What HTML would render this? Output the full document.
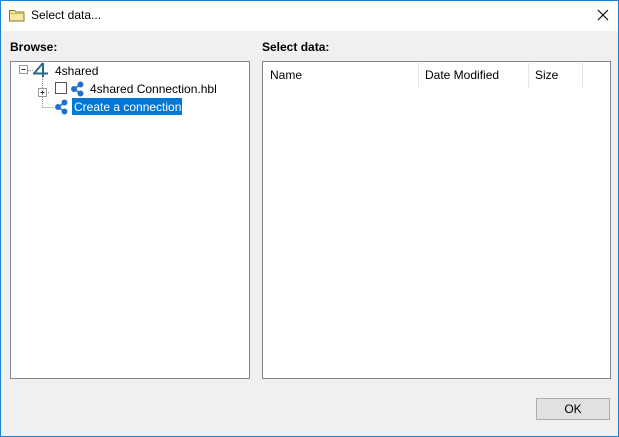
<!DOCTYPE html>
<html><head><style>
*{margin:0;padding:0;box-sizing:border-box}
body{width:619px;height:437px;background:#f0f0f0;font-family:"Liberation Sans",sans-serif;font-size:12px;color:#000;position:relative;overflow:hidden}
.title{position:absolute;left:0;top:0;width:619px;height:31px;background:#fff}
.abs{position:absolute;white-space:nowrap}
.box{position:absolute;background:#fff;border:1px solid #828790}
</style></head><body>
<div class="title"></div>
<div class="abs" style="left:0;top:0;width:619px;height:437px;border:1px solid #1883d7"></div>
<svg class="abs" style="left:9px;top:8px" width="16" height="14"><path d="M0.5 2.5h5l1.5 1.5h8v9h-14.5z" fill="#f8e9a0" stroke="#8a7a30"/><path d="M0.5 5.5h15" stroke="#c9b45a"/></svg>
<div class="abs" style="left:31px;top:8px;font-size:12px">Select data...</div>
<svg class="abs" style="left:597px;top:9px" width="12" height="12"><path d="M1 1L11 11M11 1L1 11" stroke="#000" stroke-width="1.1"/></svg>
<div class="abs" style="left:10px;top:40px;font-weight:bold">Browse:</div>
<div class="abs" style="left:262px;top:40px;font-weight:bold">Select data:</div>
<div class="box" style="left:10px;top:61px;width:240px;height:318px"></div>
<div class="box" style="left:262px;top:61px;width:349px;height:318px"></div>
<div class="abs" style="left:418px;top:63px;width:1px;height:24px;background:#e5e5e5"></div>
<div class="abs" style="left:528px;top:63px;width:1px;height:24px;background:#e5e5e5"></div>
<div class="abs" style="left:582px;top:63px;width:1px;height:24px;background:#e5e5e5"></div>
<div class="abs" style="left:270px;top:68px">Name</div>
<div class="abs" style="left:425px;top:68px">Date Modified</div>
<div class="abs" style="left:535px;top:68px">Size</div>
<svg class="abs" style="left:14px;top:62px" width="200" height="56">
<g stroke="#888" stroke-dasharray="1 1" fill="none">
<path d="M14 8.5h5M28.5 15v31M32 30.5h4M28.5 45.5h12"/>
</g>
<rect x="5.5" y="3.5" width="8" height="8" fill="#fff" stroke="#999"/><path d="M7.5 7.5h4" stroke="#333"/>
<path d="M19 11.5h15M29 1L20 11.5M29 1v14" stroke="#2b6a84" stroke-width="2" fill="none"/>
<rect x="24.5" y="26.5" width="8" height="8" fill="#fff" stroke="#999"/><path d="M26.5 30.5h4M28.5 28.5v4" stroke="#333"/>
<rect x="41.5" y="20.5" width="11" height="11" fill="#fff" stroke="#555"/>
<g fill="#1f6fd0" stroke="#1f6fd0" stroke-width="1.5"><path d="M60 27L66 23M60 27L66 31"/><circle cx="60" cy="27" r="2.2"/><circle cx="66.5" cy="22.5" r="2.2"/><circle cx="66.5" cy="31.5" r="2.2"/></g>
<g fill="#1f6fd0" stroke="#1f6fd0" stroke-width="1.5"><path d="M44 45L50 41M44 45L50 49"/><circle cx="44" cy="45" r="2.2"/><circle cx="50.5" cy="40.5" r="2.2"/><circle cx="50.5" cy="49.5" r="2.2"/></g>
</svg>
<div class="abs" style="left:55px;top:64px">4shared</div>
<div class="abs" style="left:90px;top:82px">4shared Connection.hbl</div>
<div class="abs" style="left:72px;top:98px;width:110px;height:17px;background:#0078d7;color:#fff;padding:2px 0 0 2px">Create a connection</div>
<div class="abs" style="left:536px;top:398px;width:74px;height:22px;background:#e1e1e1;border:1px solid #adadad;text-align:center;line-height:20px">OK</div>
</body></html>
